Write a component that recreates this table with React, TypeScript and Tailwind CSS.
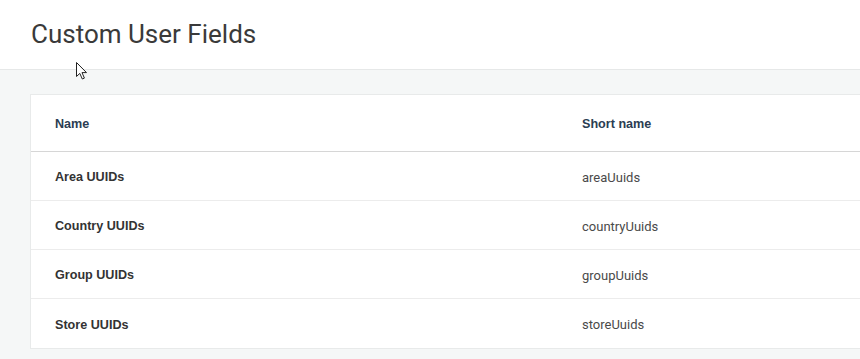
import React from "react";

const rows = [
  { name: "Area UUIDs", short: "areaUuids" },
  { name: "Country UUIDs", short: "countryUuids" },
  { name: "Group UUIDs", short: "groupUuids" },
  { name: "Store UUIDs", short: "storeUuids" },
];

function Pointer() {
  return (
    <svg width="13" height="20" viewBox="0 0 13 20" className="absolute left-[75px] top-[61px]">
      <path
        d="M1.5 1.5 L1.5 15.5 L4.8 12.4 L7.3 18 L9.4 17.1 L7 11.6 L11.5 11.6 Z"
        fill="#ffffff"
        stroke="#222222"
        strokeWidth="1"
        strokeLinejoin="miter"
      />
    </svg>
  );
}

export default function App() {
  return (
    <div className="relative w-[860px] h-[359px] overflow-hidden bg-[#f5f7f7] font-['Roboto',sans-serif]">
      <div className="h-[70px] bg-white border-b border-[#e6e8e8] pl-[31px] pt-[18px]">
        <h1 className="text-[26px] leading-[32px] text-[#3a3a3a] font-normal">Custom User Fields</h1>
      </div>
      <div className="pl-[30px] pt-[24px]">
        <div className="w-[840px] bg-white border border-[#e8eaea]">
          <div className="flex h-[57px] items-center border-b border-[#d6d6d6] pt-[3px]">
            <div className="w-[551px] pl-[24px] text-[12.6px] font-bold text-[#2b3d52] font-['Liberation_Sans',sans-serif]">Name</div>
            <div className="text-[12.6px] font-bold text-[#2b3d52] font-['Liberation_Sans',sans-serif]">Short name</div>
          </div>
          {rows.map((r, i) => (
            <div
              key={r.short}
              className={`flex h-[49px] items-center pt-[3px] ${i < rows.length - 1 ? "border-b border-[#ececec]" : ""}`}
            >
              <div className="w-[551px] pl-[24px] text-[12.6px] font-bold text-[#333333] font-['Liberation_Sans',sans-serif]">{r.name}</div>
              <div className="text-[13px] text-[#4a4a4a]">{r.short}</div>
            </div>
          ))}
        </div>
      </div>
      <Pointer />
    </div>
  );
}
